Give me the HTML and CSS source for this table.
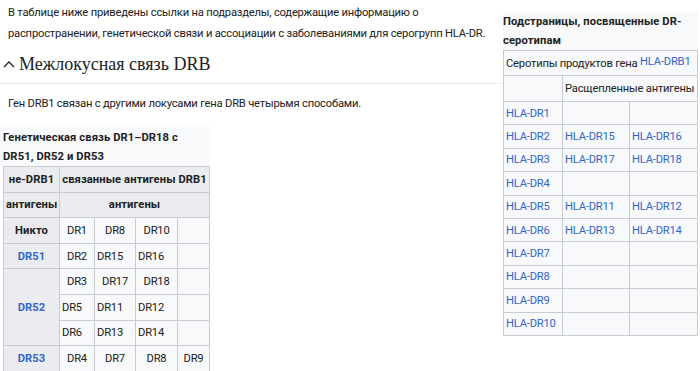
FILE: index.html
```html
<!DOCTYPE html>
<html lang="ru">

<head>
    <meta charset="UTF-8">
    <meta name="viewport" content="width=device-width, initial-scale=1.0">
    <title>HLA-DR</title>
    <link rel="stylesheet" href="styles.css">
</head>

<body>
    <div class="page">
        <div class="main">
            <p class="text">В таблице ниже приведены ссылки на подразделы, содержащие информацию о распространении,
                генетической связи и ассоциации с заболеваниями для серогрупп HLA-DR.</p>

            <h2 class="section"><span class="chevron">
                    <svg width="12" height="8" viewBox="0 0 12 8">
                        <path d="M1 7 L6 2 L11 7" fill="none" stroke="#202122" stroke-width="1.3" />
                    </svg>
                </span>Межлокусная связь DRB</h2>

            <p class="text after">Ген DRB1 связан с другими локусами гена DRB четырьмя способами.</p>

            <table class="wikitable linkage">
                <caption>Генетическая связь DR1–DR18 с DR51, DR52 и DR53</caption>
                <colgroup>
                    <col style="width: 56px">
                    <col style="width: 35px">
                    <col style="width: 41px">
                    <col style="width: 42px">
                    <col style="width: 32px">
                </colgroup>
                <tr>
                    <th>не-DRB1</th>
                    <th colspan="4">связанные антигены DRB1</th>
                </tr>
                <tr>
                    <th>антигены</th>
                    <th colspan="4">антигены</th>
                </tr>
                <tr>
                    <th>Никто</th>
                    <td>DR1</td>
                    <td>DR8</td>
                    <td>DR10</td>
                    <td></td>
                </tr>
                <tr>
                    <th><a href="#">DR51</a></th>
                    <td>DR2</td>
                    <td class="left">DR15</td>
                    <td class="left">DR16</td>
                    <td></td>
                </tr>
                <tr>
                    <th rowspan="3"><a href="#">DR52</a></th>
                    <td>DR3</td>
                    <td>DR17</td>
                    <td>DR18</td>
                    <td></td>
                </tr>
                <tr>
                    <td class="left">DR5</td>
                    <td class="left">DR11</td>
                    <td class="left">DR12</td>
                    <td></td>
                </tr>
                <tr>
                    <td class="left">DR6</td>
                    <td class="left">DR13</td>
                    <td class="left">DR14</td>
                    <td></td>
                </tr>
                <tr>
                    <th><a href="#">DR53</a></th>
                    <td>DR4</td>
                    <td>DR7</td>
                    <td>DR8</td>
                    <td>DR9</td>
                </tr>
            </table>
        </div>

        <div class="aside">
            <table class="wikitable subpages">
                <caption>Подстраницы, посвященные DR-серотипам</caption>
                <colgroup>
                    <col style="width: 59px">
                    <col style="width: 67px">
                    <col style="width: 68px">
                </colgroup>
                <tr class="head">
                    <td colspan="3">Серотипы продуктов гена <a class="raised" href="#">HLA-DRB1</a></td>
                </tr>
                <tr class="head second">
                    <td></td>
                    <td colspan="2">Расщепленные антигены</td>
                </tr>
                <tr><td><a href="#">HLA-DR1</a></td><td></td><td></td></tr>
                <tr><td><a href="#">HLA-DR2</a></td><td><a href="#">HLA-DR15</a></td><td><a href="#">HLA-DR16</a></td></tr>
                <tr><td><a href="#">HLA-DR3</a></td><td><a href="#">HLA-DR17</a></td><td><a href="#">HLA-DR18</a></td></tr>
                <tr><td><a href="#">HLA-DR4</a></td><td></td><td></td></tr>
                <tr><td><a href="#">HLA-DR5</a></td><td><a href="#">HLA-DR11</a></td><td><a href="#">HLA-DR12</a></td></tr>
                <tr><td><a href="#">HLA-DR6</a></td><td><a href="#">HLA-DR13</a></td><td><a href="#">HLA-DR14</a></td></tr>
                <tr><td><a href="#">HLA-DR7</a></td><td></td><td></td></tr>
                <tr><td><a href="#">HLA-DR8</a></td><td></td><td></td></tr>
                <tr><td><a href="#">HLA-DR9</a></td><td></td><td></td></tr>
                <tr><td><a href="#">HLA-DR10</a></td><td></td><td></td></tr>
            </table>
        </div>
    </div>
</body>

</html>
```

FILE: styles.css
```css
body {
    font-family: Roboto, "Noto Sans", sans-serif;
    font-size: 11.2px;
    letter-spacing: -0.2px;
    color: #202122;
    background-color: #fff;
    margin: 0;
    padding: 0;
}

a {
    color: #3366cc;
    text-decoration: none;
}

.page {
    display: flex;
    align-items: flex-start;
}

.main {
    width: 503px;
    flex-shrink: 0;
}

.aside {
    width: 195px;
    padding-top: 12px;
}

.text {
    margin: 2px 0 0 8px;
    line-height: 21px;
}

.text.after {
    margin-top: 9px;
}

.section {
    display: flex;
    align-items: center;
    margin: 0;
    padding: 5px 0 4px 0;
    height: 30px;
    font-family: "Liberation Serif", "DejaVu Serif", serif;
    font-weight: normal;
    font-size: 18px;
    letter-spacing: 0;
    border-bottom: 1px solid #eaecf0;
}

.chevron {
    display: inline-flex;
    width: 16px;
    padding-left: 3px;
}

.wikitable {
    border-collapse: collapse;
    background-color: #f8f9fa;
    table-layout: fixed;
}

.wikitable caption {
    font-weight: bold;
    letter-spacing: 0.1px;
    text-align: left;
    line-height: 19px;
    background-color: #f8f9fa;
}

.wikitable th,
.wikitable td {
    border: 1px solid #c8ccd1;
    padding: 0 2px;
    white-space: nowrap;
}

.wikitable th {
    background-color: #eaecf0;
    letter-spacing: 0.1px;
}

.linkage {
    margin: 13px 0 0 3px;
    width: 207px;
}

.linkage caption {
    margin-left: -3px;
    padding: 1px 0 0 3px;
}

.linkage th,
.linkage td {
    height: 24.6px;
    text-align: center;
}

.linkage td.left {
    text-align: left;
}

.subpages {
    width: 195px;
}

.subpages td {
    height: 22.4px;
    text-align: left;
}

.subpages tr.head td {
    height: 24px;
}

.subpages tr.second td {
    height: 25px;
}

.raised {
    position: relative;
    top: -2px;
}
```
